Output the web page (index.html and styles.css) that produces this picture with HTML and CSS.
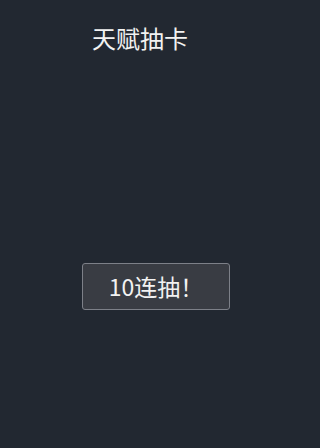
FILE: index.html
```html
<!DOCTYPE html>
<html lang="zh">
<head>
<meta charset="utf-8">
<link rel="stylesheet" href="styles.css">
</head>
<body>
<div class="page">
  <h1 class="title">天赋抽卡</h1>
  <div class="stage">
    <button class="draw-btn">10连抽！</button>
  </div>
</div>
</body>
</html>
```
FILE: styles.css
```css
html, body {
  margin: 0;
  padding: 0;
  background: #222831;
  height: 100%;
}
.page {
  font-family: "Noto Sans CJK SC", "Noto Sans", sans-serif;
  color: #f2f2f2;
  display: flex;
  flex-direction: column;
  height: 448px;
}
.title {
  margin: 21px 0 0 92px;
  font-size: 24px;
  font-weight: 400;
  line-height: 34px;
  letter-spacing: 0;
}
.stage {
  padding: 208px 0 0 82px;
}
.draw-btn {
  width: 148px;
  height: 47px;
  box-sizing: border-box;
  background: #393c43;
  border: 1px solid #7d8088;
  border-radius: 3px;
  color: #f2f2f2;
  font-family: "Noto Sans CJK SC", "Noto Sans", sans-serif;
  font-size: 23px;
  line-height: 1;
  padding: 0 0 1px 0;
  cursor: pointer;
}
```
